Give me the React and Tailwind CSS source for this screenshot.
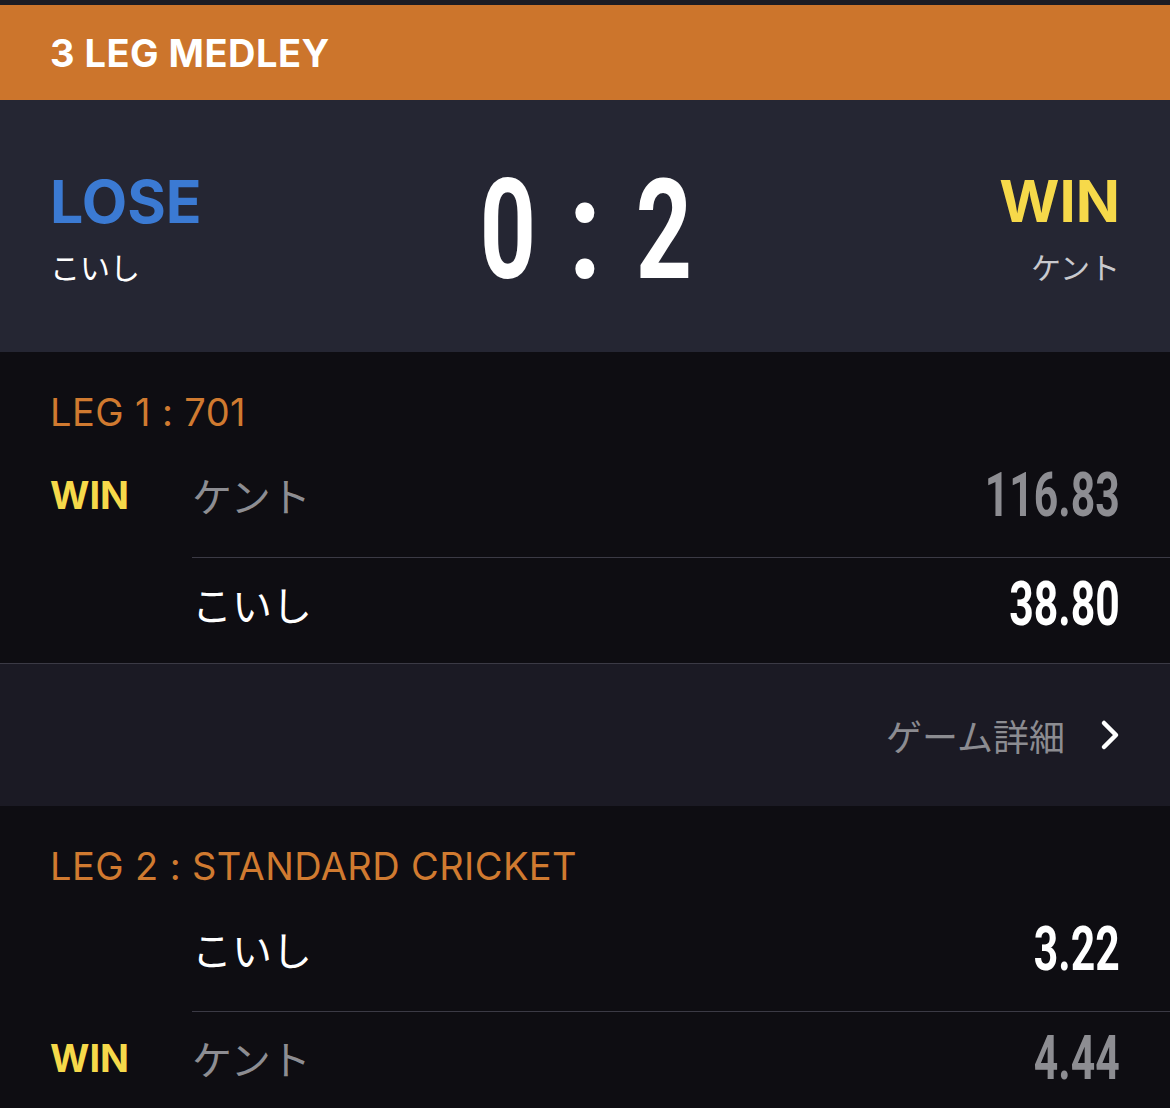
const SANS = "font-['Inter','Noto_Sans_CJK_JP',sans-serif]";
const JP = "font-['Noto_Sans_CJK_JP',sans-serif]";
const NUM = "font-['Roboto','Liberation_Sans',sans-serif]";

const legs = [
  {
    title: "LEG 1 : 701",
    rows: [
      { name: "ケント", score: "116.83", win: true },
      { name: "こいし", score: "38.80", win: false },
    ],
    details: true,
  },
  {
    title: "LEG 2 : STANDARD CRICKET",
    rows: [
      { name: "こいし", score: "3.22", win: false },
      { name: "ケント", score: "4.44", win: true },
    ],
    details: false,
  },
];

const Digit = ({ children, scale = "scale-x-[0.7]" }) => (
  <span className={`w-[78px] text-center inline-block ${scale}`}>{children}</span>
);

const Row = ({ row, first }) => {
  const pad = first ? "pt-[19px] pb-[37px]" : "pt-[21px] pb-[34px]";
  const tone = row.win ? "text-[#8d8d92]" : "text-white";
  return (
    <div className="flex">
      <div className={`w-[142px] shrink-0 ${pad} ${first ? "" : "border-t border-transparent"}`}>
        {row.win && (
          <span className={`${SANS} block text-[38px] leading-[50px] font-bold text-[#f6d94a]`}>WIN</span>
        )}
      </div>
      <div
        className={`flex-1 flex items-center justify-between pr-[50px] ${pad} ${
          first ? "" : "border-t border-[#3b3a45]"
        }`}
      >
        <span className={`${JP} text-[40px] leading-[50px] ${tone}`}>{row.name}</span>
        <span
          className={`${NUM} inline-block origin-right scale-x-[0.7] text-[61px] leading-[50px] font-bold ${tone}`}
        >
          {row.score}
        </span>
      </div>
    </div>
  );
};

const Leg = ({ leg }) => (
  <>
    <section className={`bg-[#0e0d12] pl-[50px] pt-[41px] ${leg.details ? "border-b border-[#3b3a45]" : ""}`}>
      <h3 className={`${SANS} text-[38px] leading-none tracking-[0.4px] text-[#d07a30] mb-[20px]`}>{leg.title}</h3>
      {leg.rows.map((row, i) => (
        <Row key={i} row={row} first={i === 0} />
      ))}
    </section>
    {leg.details && (
      <div className="bg-[#1b1a24] h-[142px] flex items-center justify-end pr-[50px] gap-[35px]">
        <span className={`${JP} text-[36px] leading-none text-[#8c8c91]`}>ゲーム詳細</span>
        <svg width="20" height="34" viewBox="0 0 20 34" fill="none">
          <path d="M4 5 L16 17 L4 29" stroke="#fff" strokeWidth="4.5" strokeLinecap="round" strokeLinejoin="round" />
        </svg>
      </div>
    )}
  </>
);

export default function App() {
  return (
    <div className="w-[1170px] h-[1108px] overflow-hidden bg-[#0e0d12]">
      <div className="h-[5px] bg-[#1c1c24]" />
      <div className="h-[95px] bg-[#cc752c] flex items-center px-[50px]">
        <h1 className={`${SANS} text-[38px] leading-none tracking-[0.5px] font-bold text-white`}>3 LEG MEDLEY</h1>
      </div>

      <header className="h-[252px] bg-[#252633] px-[50px] grid grid-cols-3 items-center">
        <div>
          <div className={`${SANS} text-[59px] leading-[59px] font-bold text-[#3b7ad3]`}>LOSE</div>
          <div className={`${JP} text-[30px] leading-[30px] mt-[20px] text-white`}>こいし</div>
        </div>
        <div className={`${NUM} flex justify-center mt-[7px] text-[140px] leading-none font-bold text-white`}>
          <Digit>0</Digit>
          <Digit scale="scale-x-[0.85]">:</Digit>
          <Digit>2</Digit>
        </div>
        <div className="flex flex-col items-end">
          <div className={`${SANS} text-[58px] leading-[59px] font-bold text-[#f6d94a]`}>WIN</div>
          <div className={`${JP} text-[30px] leading-[30px] mt-[20px] text-[#c9c9ce]`}>ケント</div>
        </div>
      </header>

      {legs.map((leg, i) => (
        <Leg key={i} leg={leg} />
      ))}
    </div>
  );
}
